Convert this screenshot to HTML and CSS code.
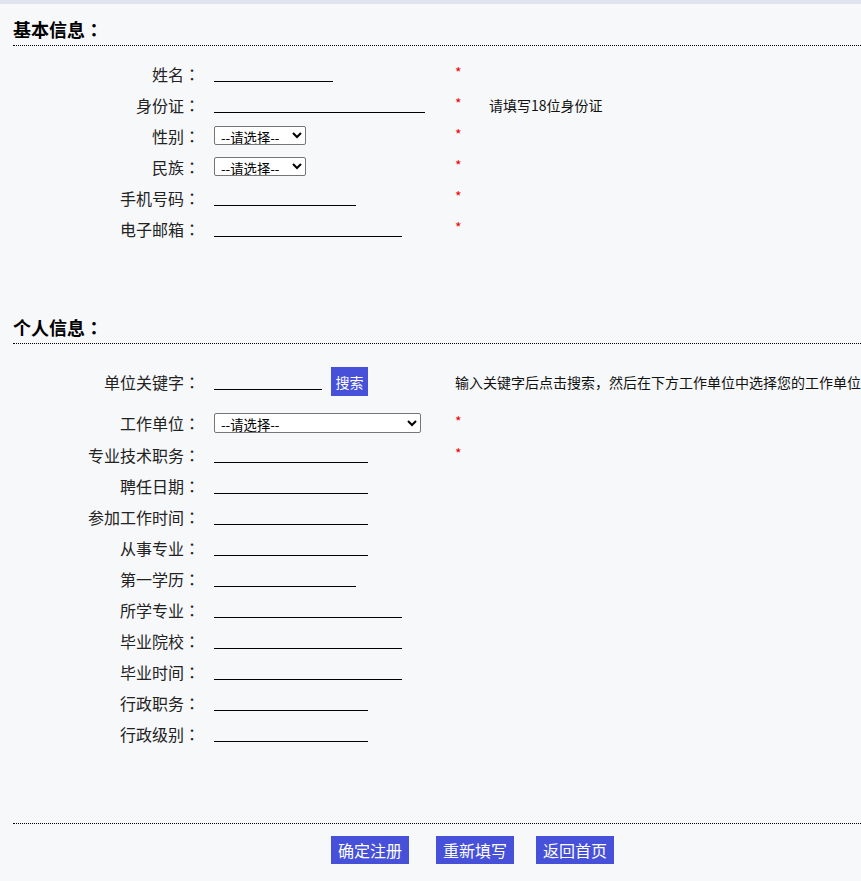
FILE: index.html
```html
<!DOCTYPE html>
<html>
<head>
<meta charset="utf-8">
<title>注册</title>
<link rel="stylesheet" href="styles.css">
</head>
<body>
<div class="topbar"></div>
<div class="page">
  <section class="section first">
    <h2 class="sec-title">基本信息</h2>
    <div class="rows">
      <div class="row"><label class="lbl">姓名</label><div class="fld"><input class="txt w119" type="text"></div><div class="ext"><span class="star">*</span></div></div>
      <div class="row"><label class="lbl">身份证</label><div class="fld"><input class="txt w211" type="text"></div><div class="ext"><span class="star">*</span><span class="hint">请填写18位身份证</span></div></div>
      <div class="row"><label class="lbl">性别</label><div class="fld"><select class="sel w92"><option>--请选择--</option></select></div><div class="ext"><span class="star">*</span></div></div>
      <div class="row"><label class="lbl">民族</label><div class="fld"><select class="sel w92"><option>--请选择--</option></select></div><div class="ext"><span class="star">*</span></div></div>
      <div class="row"><label class="lbl">手机号码</label><div class="fld"><input class="txt w142" type="text"></div><div class="ext"><span class="star">*</span></div></div>
      <div class="row"><label class="lbl">电子邮箱</label><div class="fld"><input class="txt w188" type="text"></div><div class="ext"><span class="star">*</span></div></div>
    </div>
  </section>

  <section class="section second">
    <h2 class="sec-title">个人信息</h2>
    <div class="rows">
      <div class="row tall"><label class="lbl">单位关键字</label><div class="fld"><input class="txt w108" type="text"><button class="btn-search" type="button">搜索</button></div><div class="ext"><span class="hint">输入关键字后点击搜索，然后在下方工作单位中选择您的工作单位</span></div></div>
      <div class="row unit"><label class="lbl">工作单位</label><div class="fld"><select class="sel w207"><option>--请选择--</option></select></div><div class="ext"><span class="star">*</span></div></div>
      <div class="row"><label class="lbl">专业技术职务</label><div class="fld"><input class="txt w154" type="text"></div><div class="ext"><span class="star">*</span></div></div>
      <div class="row"><label class="lbl">聘任日期</label><div class="fld"><input class="txt w154" type="text"></div><div class="ext"></div></div>
      <div class="row"><label class="lbl">参加工作时间</label><div class="fld"><input class="txt w154" type="text"></div><div class="ext"></div></div>
      <div class="row"><label class="lbl">从事专业</label><div class="fld"><input class="txt w154" type="text"></div><div class="ext"></div></div>
      <div class="row"><label class="lbl">第一学历</label><div class="fld"><input class="txt w142" type="text"></div><div class="ext"></div></div>
      <div class="row"><label class="lbl">所学专业</label><div class="fld"><input class="txt w188" type="text"></div><div class="ext"></div></div>
      <div class="row"><label class="lbl">毕业院校</label><div class="fld"><input class="txt w188" type="text"></div><div class="ext"></div></div>
      <div class="row"><label class="lbl">毕业时间</label><div class="fld"><input class="txt w188" type="text"></div><div class="ext"></div></div>
      <div class="row"><label class="lbl">行政职务</label><div class="fld"><input class="txt w154" type="text"></div><div class="ext"></div></div>
      <div class="row"><label class="lbl">行政级别</label><div class="fld"><input class="txt w154" type="text"></div><div class="ext"></div></div>
    </div>
  </section>

  <div class="footer">
    <button class="btn" type="button">确定注册</button>
    <button class="btn b2" type="button">重新填写</button>
    <button class="btn b3" type="button">返回首页</button>
  </div>
</div>
</body>
</html>
```
FILE: styles.css
```css
html, body {
  margin: 0;
  padding: 0;
  background: #f7f8fa;
  font-family: "Noto Sans CJK SC", "Noto Sans", sans-serif;
  color: #111;
}
.topbar {
  height: 4px;
  background: #e0e4ee;
}
.page {
  padding-left: 13px;
}
.sec-title {
  margin: 12px 0 0 0;
  padding: 0 0 3px 0;
  font-size: 18px;
  line-height: 26px;
  font-weight: bold;
  color: #000;
  border-bottom: 1px dotted #000;
}
.sec-title::after,
.lbl::after {
  content: "：";
  font-family: "Noto Sans CJK TC", "Noto Sans CJK SC", sans-serif;
  font-feature-settings: "locl" 0;
}
.second .sec-title {
  margin-top: 70px;
}
.rows {
  margin-top: 12px;
}
.row {
  display: grid;
  grid-template-columns: 187px 241px 1fr;
  column-gap: 14px;
  height: 31px;
  align-items: center;
}
.row.tall {
  height: 51px;
}
.row.unit {
  height: 32px;
}
.lbl {
  text-align: right;
  font-size: 16px;
  line-height: 20px;
  color: #222;
  white-space: nowrap;
}
.fld {
  display: flex;
  align-items: center;
  margin-right: -14px;
}
.ext {
  display: flex;
  align-items: center;
  margin-left: -14px;
  font-size: 14px;
  white-space: nowrap;
}
.txt {
  box-sizing: border-box;
  height: 17px;
  margin: 0;
  padding: 0;
  border: none;
  border-bottom: 1px solid #000;
  background: transparent;
  outline: none;
}
.w108 { width: 108px; }
.w119 { width: 119px; }
.w142 { width: 142px; }
.w154 { width: 154px; }
.w188 { width: 188px; }
.w211 { width: 211px; }
.sel {
  box-sizing: border-box;
  height: 19px;
  margin: 0;
  padding: 0 2px;
  font-family: "Noto Sans CJK SC", sans-serif;
  font-size: 13.33px;
  color: #000;
  background: #fff;
  border: 1px solid #767676;
  border-radius: 2px;
}
.w92 { width: 92px; }
.w207 { width: 207px; height: 20px; }
.star {
  display: inline-block;
  width: 34px;
  color: #e00;
  font-size: 14px;
  line-height: 20px;
  position: relative;
  top: -2px;
}
.hint {
  color: #111;
  font-size: 14px;
  line-height: 20px;
}
.btn-search {
  box-sizing: border-box;
  margin-left: 9px;
  width: 37px;
  height: 29px;
  padding: 0;
  border: none;
  background: #4650d8;
  color: #fff;
  font-family: "Noto Sans CJK SC", sans-serif;
  font-size: 14px;
}
.footer {
  margin-top: 74px;
  border-top: 1px dotted #000;
  padding: 12px 0 0 318px;
  display: flex;
}
.btn {
  box-sizing: border-box;
  width: 78px;
  height: 28px;
  padding: 0;
  border: none;
  background: #4650d8;
  color: #fff;
  font-family: "Noto Sans CJK SC", sans-serif;
  font-size: 16px;
}
.b2 { margin-left: 27px; }
.b3 { margin-left: 22px; }
```
